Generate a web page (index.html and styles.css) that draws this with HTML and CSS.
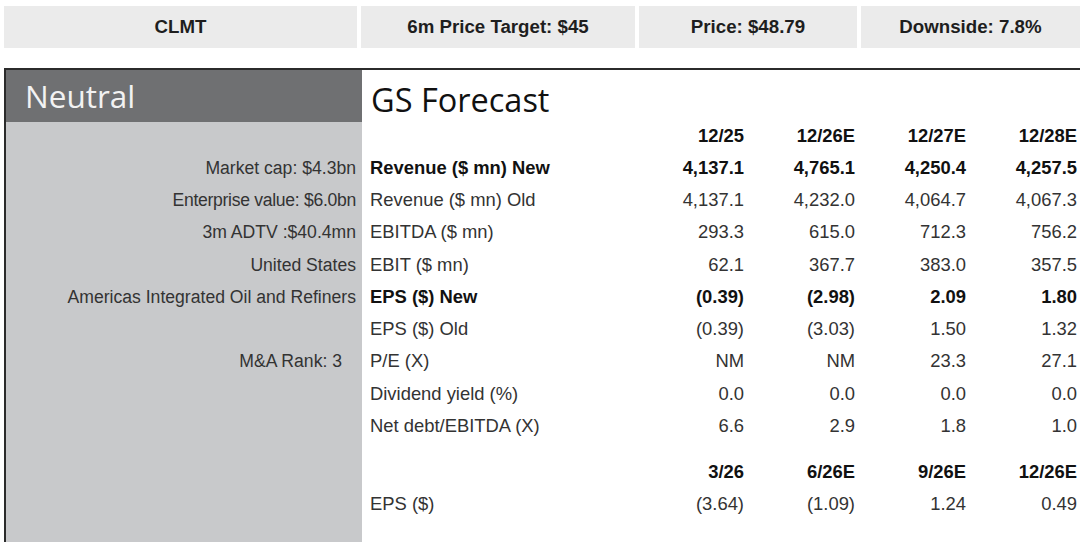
FILE: index.html
```html
<!DOCTYPE html>
<html lang="en">
<head>
<meta charset="utf-8">
<title>CLMT – GS Forecast</title>
<link rel="stylesheet" href="styles.css">
</head>
<body>
  <header class="topbar">
    <div class="tb-cell tb-ticker">CLMT</div>
    <div class="tb-cell tb-target">6m Price Target: $45</div>
    <div class="tb-cell tb-price">Price: $48.79</div>
    <div class="tb-cell tb-down">Downside: 7.8%</div>
  </header>

  <main class="main">
    <aside class="side">
      <div class="rating">Neutral</div>
      <ul class="facts">
        <li>Market cap: $4.3bn</li>
        <li class="ev">Enterprise value: $6.0bn</li>
        <li>3m ADTV :$40.4mn</li>
        <li>United States</li>
        <li>Americas Integrated Oil and Refiners</li>
        <li></li>
        <li class="rank">M&amp;A Rank: 3</li>
      </ul>
    </aside>

    <section class="forecast">
      <h1 class="title">GS Forecast</h1>
      <div class="grid">
        <div class="row bold"><span class="lbl"></span><span>12/25</span><span>12/26E</span><span>12/27E</span><span>12/28E</span></div>
        <div class="row bold"><span class="lbl">Revenue ($ mn) New</span><span>4,137.1</span><span>4,765.1</span><span>4,250.4</span><span>4,257.5</span></div>
        <div class="row"><span class="lbl">Revenue ($ mn) Old</span><span>4,137.1</span><span>4,232.0</span><span>4,064.7</span><span>4,067.3</span></div>
        <div class="row"><span class="lbl">EBITDA ($ mn)</span><span>293.3</span><span>615.0</span><span>712.3</span><span>756.2</span></div>
        <div class="row"><span class="lbl">EBIT ($ mn)</span><span>62.1</span><span>367.7</span><span>383.0</span><span>357.5</span></div>
        <div class="row bold"><span class="lbl">EPS ($) New</span><span>(0.39)</span><span>(2.98)</span><span>2.09</span><span>1.80</span></div>
        <div class="row"><span class="lbl">EPS ($) Old</span><span>(0.39)</span><span>(3.03)</span><span>1.50</span><span>1.32</span></div>
        <div class="row"><span class="lbl">P/E (X)</span><span>NM</span><span>NM</span><span>23.3</span><span>27.1</span></div>
        <div class="row"><span class="lbl">Dividend yield (%)</span><span>0.0</span><span>0.0</span><span>0.0</span><span>0.0</span></div>
        <div class="row"><span class="lbl">Net debt/EBITDA (X)</span><span>6.6</span><span>2.9</span><span>1.8</span><span>1.0</span></div>
        <div class="row bold quarter"><span class="lbl"></span><span>3/26</span><span>6/26E</span><span>9/26E</span><span>12/26E</span></div>
        <div class="row"><span class="lbl">EPS ($)</span><span>(3.64)</span><span>(1.09)</span><span>1.24</span><span>0.49</span></div>
      </div>
    </section>
  </main>
</body>
</html>
```

FILE: styles.css
```css
* { box-sizing: border-box; }

html, body {
  margin: 0;
  padding: 0;
  height: 100%;
}

body {
  background: #ffffff;
  font-family: "Liberation Sans", Arial, sans-serif;
  font-size: 17.6px;
  color: #333333;
  display: flex;
  flex-direction: column;
  overflow: hidden;
}

/* ---------- top bar ---------- */
.topbar {
  display: flex;
  gap: 4px;
  padding: 6px 0 0 4px;
}

.tb-cell {
  height: 42px;
  line-height: 42px;
  background: #ebebeb;
  text-align: center;
  font-weight: bold;
  font-size: 18.7px;
  color: #1e1e1e;
  white-space: nowrap;
}

.tb-ticker { width: 353px; }
.tb-target { width: 274px; }
.tb-price  { width: 218px; }
.tb-down   { flex: 1; }

/* ---------- main box ---------- */
.main {
  flex: 1;
  margin: 20px 0 0 4px;
  border-top: 2px solid #2b2b2b;
  border-left: 2px solid #2b2b2b;
  display: grid;
  grid-template-columns: 356px 1fr;
}

.side {
  background: #c8c9cb;
  display: flex;
  flex-direction: column;
}

.rating {
  height: 52px;
  background: #6f7072;
  color: #f2f2f2;
  font-family: "Open Sans", "Noto Sans", sans-serif;
  font-size: 31.5px;
  line-height: 52px;
  padding-left: 19px;
}

.facts {
  list-style: none;
  margin: 0;
  padding: 29.75px 0 0 0;
}

.facts li {
  height: 32.25px;
  line-height: 32.25px;
  text-align: right;
  padding-right: 6px;
  white-space: nowrap;
  color: #333333;
}

.facts li.ev { letter-spacing: -0.3px; }
.facts li.rank { padding-right: 20px; }

/* ---------- forecast ---------- */
.forecast {
  padding: 0 3px 0 8px;
}

.title {
  margin: 0;
  height: 49.5px;
  padding: 14px 0 0 1px;
  font-family: "Open Sans", "Noto Sans", sans-serif;
  font-weight: normal;
  font-size: 32.5px;
  line-height: 32px;
  color: #111111;
}

.grid {
  display: flex;
  flex-direction: column;
  font-size: 18.4px;
}

.row {
  display: grid;
  grid-template-columns: 1fr repeat(4, 111px);
  height: 32.25px;
  line-height: 32.25px;
  white-space: nowrap;
}

.row span { text-align: right; }
.row span.lbl { text-align: left; }

.row.bold {
  font-weight: bold;
  color: #111111;
}

.row.quarter { margin-top: 13.5px; }
```
